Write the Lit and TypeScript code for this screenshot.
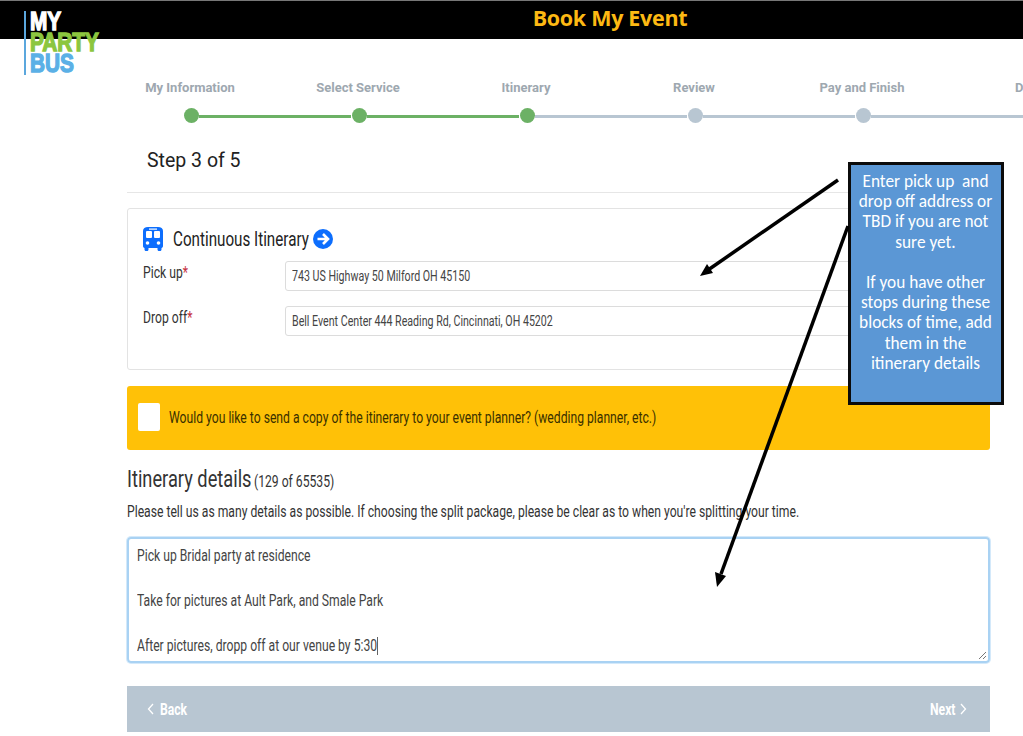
import { LitElement, html, css, svg } from "lit";
import { customElement } from "lit/decorators.js";

const steps = [
  { label: "My Information", done: true },
  { label: "Select Service", done: true },
  { label: "Itinerary", done: true },
  { label: "Review", done: false },
  { label: "Pay and Finish", done: false },
  { label: "Done", done: false },
];

@customElement("app-root")
export class AppRoot extends LitElement {
  static styles = css`
    :host { display: block; position: relative; width: 1023px; height: 736px; overflow: hidden; background: #fff; font-family: Roboto, sans-serif; color: #333; }
    .sq { display: inline-block; white-space: nowrap; transform: scaleX(0.76); transform-origin: left center; }
    .top { height: 38px; background: #000; border-top: 1px solid #777; display: flex; align-items: center; justify-content: center; padding-left: 197px; box-sizing: content-box; }
    .top b { color: #fdb913; font-size: 21.5px; font-weight: 700; font-family: "Open Sans", sans-serif; letter-spacing: -0.3px; margin-bottom: 6px; }
    .logo { position: absolute; left: 24px; top: 11px; height: 64px; border-left: 2px solid #5ba7dd; padding-left: 4px; font-family: "Liberation Sans", sans-serif; font-weight: 700; font-size: 26px; line-height: 21px; }
    .logo div { transform: scaleX(0.8); transform-origin: left; -webkit-text-stroke: 1.4px currentColor; }
    .my { color: #fff; } .party { color: #8cc63f; } .bus { color: #5bb0e6; }
    .steps { display: flex; width: 1008px; margin-left: 106px; padding-top: 41px; }
    .step { width: 168px; flex: none; display: flex; flex-direction: column; align-items: center; position: relative; }
    .step span { font-size: 13px; font-weight: 700; color: #9ea8b0; line-height: 16px; white-space: nowrap; }
    .dot { width: 15px; height: 15px; border-radius: 50%; background: #b8c6d2; margin: 12px 0 0 2px; position: relative; z-index: 1; }
    .step.done .dot { background: #6cb165; }
    .link { position: absolute; left: 93px; width: 152px; top: 35px; height: 3px; background: #b8c6d2; }
    .step.done.next .link { background: #6cb165; }
    main { width: 863px; margin-left: 127px; padding-top: 1px; }
    .h1 { font-size: 19.5px; color: #222; padding: 25px 0 19px 20px; line-height: 24px; border-bottom: 1px solid #e6e6e6; }
    .card { margin-top: 15px; height: 162px; box-sizing: border-box; border: 1px solid #e3e3e3; border-radius: 3px; padding: 15px 15px 0; }
    .ctitle { display: flex; align-items: center; font-size: 20px; height: 29px; color: #222; }
    .ctitle svg { flex: none; }
    .ctitle .t { width: 140px; margin-left: 10px; }
    .row { display: flex; height: 30px; margin-top: 15px; font-size: 16px; color: #333; }
    .row.first { margin-top: 8px; }
    .row label { width: 142px; flex: none; line-height: 24px; }
    .row i { color: #c5303e; font-style: normal; }
    .input { flex: 1; height: 28px; border: 1px solid #dcdcdc; border-radius: 3px; padding-left: 6px; font-size: 14px; line-height: 28px; color: #444; }
    .banner { margin-top: 16px; height: 64px; background: #ffc107; border-radius: 3px; display: flex; align-items: center; padding: 0 0 2px 11px; box-sizing: border-box; font-size: 16px; color: #3a3000; }
    .box { width: 22px; height: 28px; background: #fff; border-radius: 2px; margin-right: 9px; }
    .dh { margin-top: 17px; height: 24px; line-height: 24px; color: #333; white-space: nowrap; display: flex; align-items: baseline; }
    .dh .big { font-size: 24px; width: 127px; }
    .dh .small { font-size: 16px; }
    .help { margin-top: 11px; font-size: 16px; line-height: 20px; color: #333; }
    .ta { margin-top: 15px; height: 126px; box-sizing: border-box; border: 2px solid #a9d2f3; border-radius: 4px; padding: 6px 8px; position: relative; font-size: 16px; color: #444; line-height: 22.5px; box-shadow: 0 0 0 1px #d4e9fa; }
    .ta div { height: 22.5px; }
    .caret { display: inline-block; width: 1px; height: 18px; background: #333; vertical-align: -4px; }
    .grip { position: absolute; right: 1px; bottom: 1px; }
    .foot { margin-top: 23px; height: 46px; background: #b8c6d2; display: flex; justify-content: space-between; align-items: center; color: #fff; font-weight: 700; font-size: 16px; padding: 0 23px 0 20px; }
    .foot > span { display: flex; align-items: center; gap: 6px; }
    .foot .b { width: 28px; }
    .foot .n { width: 24px; }
    .foot .sq { transform: scaleX(0.76); }
    .callout { position: absolute; left: 848px; top: 162px; width: 156px; height: 243px; box-sizing: border-box; border: 3px solid #0b0b0b; background: #5b97d5; color: #fff; font-family: Carlito, Lato, sans-serif; font-size: 17.3px; line-height: 20.2px; text-align: center; padding: 7px 1px 0 0; white-space: nowrap; }
    .arrows { position: absolute; left: 0; top: 0; pointer-events: none; }
  `;

  render() {
    return html`
      <div class="top"><b>Book My Event</b></div>
      <div class="logo"><div class="my">MY</div><div class="party">PARTY</div><div class="bus">BUS</div></div>
      <div class="steps">
        ${steps.map((s, i) => html`
          <div class="step ${s.done ? "done" : ""} ${steps[i + 1]?.done ? "next" : ""}">
            <span>${s.label}</span><div class="dot"></div>
            ${i < steps.length - 1 ? html`<div class="link"></div>` : ""}
          </div>`)}
      </div>
      <main>
        <div class="h1">Step 3 of 5</div>
        <div class="card">
          <div class="ctitle">
            <svg width="20" height="24" viewBox="0 0 20 24"><path fill="#0d6efd" d="M5 0h10c3 0 5 1.500 5 4v15c0 1-.6 1.700-1.500 2v1.500c0 .8-.5 1.500-1.500 1.500h-1c-1 0-1.500-.7-1.500-1.500V21h-9v1.500C5.500 23.300 5 24 4 24H3c-1 0-1.500-.7-1.500-1.500V21C.6 20.700 0 20 0 19V4C0 1.500 2 0 5 0z"/><rect x="3" y="4" width="6" height="7" rx="1" fill="#fff"/><rect x="11" y="4" width="6" height="7" rx="1" fill="#fff"/><rect x="6" y="1.500" width="8" height="1.200" fill="#fff"/><circle cx="4.500" cy="16" r="1.800" fill="#fff"/><circle cx="15.500" cy="16" r="1.800" fill="#fff"/></svg>
            <span class="t"><span class="sq">Continuous Itinerary</span></span>
            <svg width="20" height="24" viewBox="0 0 20 24"><circle cx="10" cy="12" r="10" fill="#0d6efd"/><path d="M4.500 12h10M10 7l5 5-5 5" fill="none" stroke="#fff" stroke-width="2.600"/></svg>
          </div>
          <div class="row first"><label><span class="sq">Pick up<i>*</i></span></label><div class="input"><span class="sq">743 US Highway 50 Milford OH 45150</span></div></div>
          <div class="row"><label><span class="sq">Drop off<i>*</i></span></label><div class="input"><span class="sq">Bell Event Center 444 Reading Rd, Cincinnati, OH 45202</span></div></div>
        </div>
        <div class="banner"><div class="box"></div><span class="sq">Would you like to send a copy of the itinerary to your event planner? (wedding planner, etc.)</span></div>
        <div class="dh"><span class="big"><span class="sq">Itinerary details</span></span><span class="small"><span class="sq">(129 of 65535)</span></span></div>
        <div class="help"><span class="sq">Please tell us as many details as possible. If choosing the split package, please be clear as to when you're splitting your time.</span></div>
        <div class="ta">
          <div><span class="sq">Pick up Bridal party at residence</span></div>
          <div></div>
          <div><span class="sq">Take for pictures at Ault Park, and Smale Park</span></div>
          <div></div>
          <div><span class="sq">After pictures, dropp off at our venue by 5:30<span class="caret"></span></span></div>
          <svg class="grip" width="9" height="9" viewBox="0 0 9 9"><path d="M1 8l7-7M5 8l3-3" stroke="#777" stroke-width="1"/></svg>
        </div>
        <div class="foot">
          <span><svg width="7" height="12" viewBox="0 0 7 12"><path d="M6 1L1.500 6 6 11" fill="none" stroke="#fff" stroke-width="1.300"/></svg><span class="b"><span class="sq">Back</span></span></span>
          <span><span class="n"><span class="sq">Next</span></span><svg width="7" height="12" viewBox="0 0 7 12"><path d="M1 1l4.500 5L1 11" fill="none" stroke="#fff" stroke-width="1.300"/></svg></span>
        </div>
      </main>
      <div class="callout">Enter pick up&nbsp; and<br>drop off address or<br>TBD if you are not<br>sure yet.<br><br>If you have other<br>stops during these<br>blocks of time, add<br>them in the<br>itinerary details</div>
      <svg class="arrows" width="1023" height="736">
        ${svg`<line x1="838" y1="180" x2="708" y2="270" stroke="#000" stroke-width="3.500"/>
        <path d="M700 276l7-12 6 9z" fill="#000"/>
        <line x1="848" y1="226" x2="721" y2="574" stroke="#000" stroke-width="3.500"/>
        <path d="M717 587l-2-15 11 4z" fill="#000"/>`}
      </svg>
    `;
  }
}
